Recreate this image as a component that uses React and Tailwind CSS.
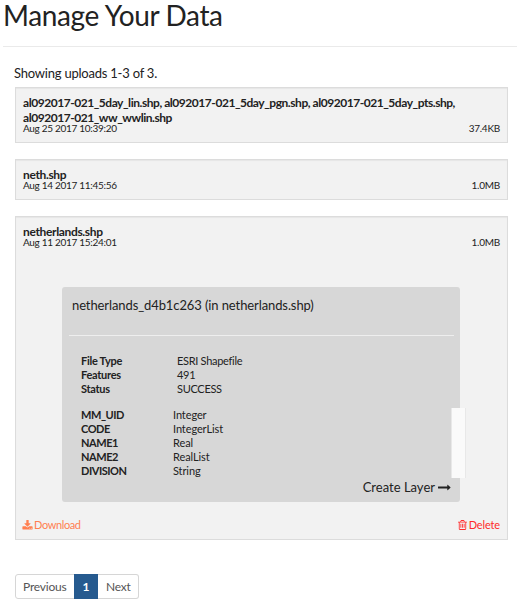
const ICONS = {
  download:
    "M1344 1344q0-26-19-45t-45-19-45 19-19 45 19 45 45 19 45-19 19-45zm256 0q0-26-19-45t-45-19-45 19-19 45 19 45 45 19 45-19 19-45zm128-224v320q0 40-28 68t-68 28h-1472q-40 0-68-28t-28-68v-320q0-40 28-68t68-28h465l135 136q58 56 136 56t136-56l136-136h464q40 0 68 28t28 68zm-325-569q17 41-14 70l-448 448q-18 19-45 19t-45-19l-448-448q-31-29-14-70 17-39 59-39h256v-448q0-26 19-45t45-19h256q26 0 45 19t19 45v448h256q42 0 59 39z",
  trash:
    "M704 736v576q0 14-9 23t-23 9h-64q-14 0-23-9t-9-23v-576q0-14 9-23t23-9h64q14 0 23 9t9 23zm256 0v576q0 14-9 23t-23 9h-64q-14 0-23-9t-9-23v-576q0-14 9-23t23-9h64q14 0 23 9t9 23zm256 0v576q0 14-9 23t-23 9h-64q-14 0-23-9t-9-23v-576q0-14 9-23t23-9h64q14 0 23 9t9 23zm128 724v-948h-896v948q0 22 7 40.5t14.5 27 10.5 8.5h832q3 0 10.5-8.5t14.5-27 7-40.5zm-672-1076h448l-48-117q-7-9-17-11h-317q-10 2-17 11zm928 32v64q0 14-9 23t-23 9h-96v948q0 83-47 143.5t-113 60.5h-832q-66 0-113-58.5t-47-141.5v-952h-96q-14 0-23-9t-9-23v-64q0-14 9-23t23-9h309l70-167q15-37 54-63t79-26h320q40 0 79 26t54 63l70 167h309q14 0 23 9t9 23z",
  arrow:
    "M1728 893q0 14-10 24l-384 354q-16 14-35 6-19-9-19-29v-224h-1248q-14 0-23-9t-9-23v-192q0-14 9-23t23-9h1248v-224q0-21 19-29t35 5l384 350q10 10 10 23z",
};

function Icon({ name, viewBox = "0 0 1792 1792", className }) {
  return (
    <svg viewBox={viewBox} className={className} fill="currentColor" aria-hidden="true">
      <path d={ICONS[name]} />
    </svg>
  );
}

const META = [
  ["File Type", "ESRI Shapefile"],
  ["Features", "491"],
  ["Status", "SUCCESS"],
];

const FIELDS = [
  ["MM_UID", "Integer"],
  ["CODE", "IntegerList"],
  ["NAME1", "Real"],
  ["NAME2", "RealList"],
  ["DIVISION", "String"],
];

function Upload({ name, date, size, className, children }) {
  return (
    <section
      className={`w-[493px] border border-[#dcdcdc] bg-[#f2f2f2] px-[7px] pt-[7px] shadow-[inset_0_1px_1px_rgba(0,0,0,0.05)] ${className}`}
    >
      <h2 className="text-[12px] leading-[15px] font-bold tracking-[-0.35px]">{name}</h2>
      <div className="-mt-0.5 flex justify-between text-[10px] leading-[10px]">
        <span className="tracking-[-0.3px]">{date}</span>
        <span className="tracking-[-0.25px]">{size}</span>
      </div>
      {children}
    </section>
  );
}

export default function App() {
  return (
    <main className="min-h-[604px] w-[517px] bg-white font-['Lato',sans-serif] text-[#222222]">
      <h1 className="ml-[3px] h-[46px] text-[28px] leading-[30px] tracking-[-0.37px]">
        Manage Your Data
      </h1>
      <hr className="ml-[3px] border-[#eaeaea]" />
      <div className="ml-[15px]">
        <p className="mt-[17px] -ml-px h-[23px] text-[13px] leading-[18px] tracking-[-0.22px]">
          Showing uploads 1-3 of 3.
        </p>
        <Upload
          className="h-[56px]"
          name={
            <span className="tracking-[-0.46px]">
              al092017-021_5day_lin.shp, al092017-021_5day_pgn.shp, al092017-021_5day_pts.shp,
              <br />
              al092017-021_ww_wwlin.shp
            </span>
          }
          date="Aug 25 2017 10:39:20"
          size="37.4KB"
        />
        <Upload
          className="mt-4 h-[41px]"
          name="neth.shp"
          date="Aug 14 2017 11:45:56"
          size="1.0MB"
        />
        <Upload
          className="mt-4 h-[324px]"
          name="netherlands.shp"
          date="Aug 11 2017 15:24:01"
          size="1.0MB"
        >
          <div className="relative mt-[40px] ml-[39px] h-[215px] w-[398px] rounded-[3px] bg-[#d7d7d7] pr-[6px] pl-[7px]">
            <h3 className="h-[48px] pt-[9px] pl-[3px] text-[13px] leading-[18px] tracking-[-0.1px]">
              netherlands_d4b1c263 (in netherlands.shp)
            </h3>
            <hr className="border-[#eeeeee]" />
            <dl className="mt-[18px] ml-3 grid grid-cols-[96px_1fr] text-[11px] leading-[14px]">
              {META.map(([label, value]) => (
                <div key={label} className="contents">
                  <dt className="font-bold tracking-[-0.28px]">{label}</dt>
                  <dd className="tracking-[-0.3px]">{value}</dd>
                </div>
              ))}
            </dl>
            <dl className="mt-3 ml-3 grid grid-cols-[92px_1fr] text-[11px] leading-[14px]">
              {FIELDS.map(([label, value]) => (
                <div key={label} className="contents">
                  <dt className="font-bold tracking-[-0.45px]">{label}</dt>
                  <dd className="tracking-[-0.1px]">{value}</dd>
                </div>
              ))}
            </dl>
            <div className="absolute top-[121px] left-[389px] h-[70px] w-[15px] border-x border-[#e8e8e8] bg-[#fafafa]" />
            <a className="mr-[3px] flex items-center justify-end gap-[3px] text-[13px] leading-[18px]">
              Create Layer
              <Icon name="arrow" className="h-[13px] w-[13px]" />
            </a>
          </div>
          <div className="mt-4 flex justify-between text-[11px] leading-[14px]">
            <a className="-ml-px flex items-center gap-[1px] tracking-[-0.38px] text-[#ff7f50]">
              <Icon name="download" className="h-[11px] w-[11px]" />
              Download
            </a>
            <a className="flex items-center gap-[2px] tracking-[-0.15px] text-[#ff2a2a]">
              <Icon name="trash" viewBox="192 128 1408 1536" className="h-[10px] w-[9px]" />
              Delete
            </a>
          </div>
        </Upload>
        <nav className="mt-[34px] flex h-[25px] w-[124px] text-[12px] leading-[23px] text-[#555]">
          <a className="w-[60px] rounded-l-[3px] border border-[#d6d6d6] pl-[7px] tracking-[-0.2px]">
            Previous
          </a>
          <a className="-ml-px w-[24px] border border-[#265a8f] bg-[#265a8f] text-center font-bold text-white">
            1
          </a>
          <a className="w-[41px] rounded-r-[3px] border border-l-0 border-[#d6d6d6] pl-2 tracking-[-0.2px]">
            Next
          </a>
        </nav>
      </div>
    </main>
  );
}
